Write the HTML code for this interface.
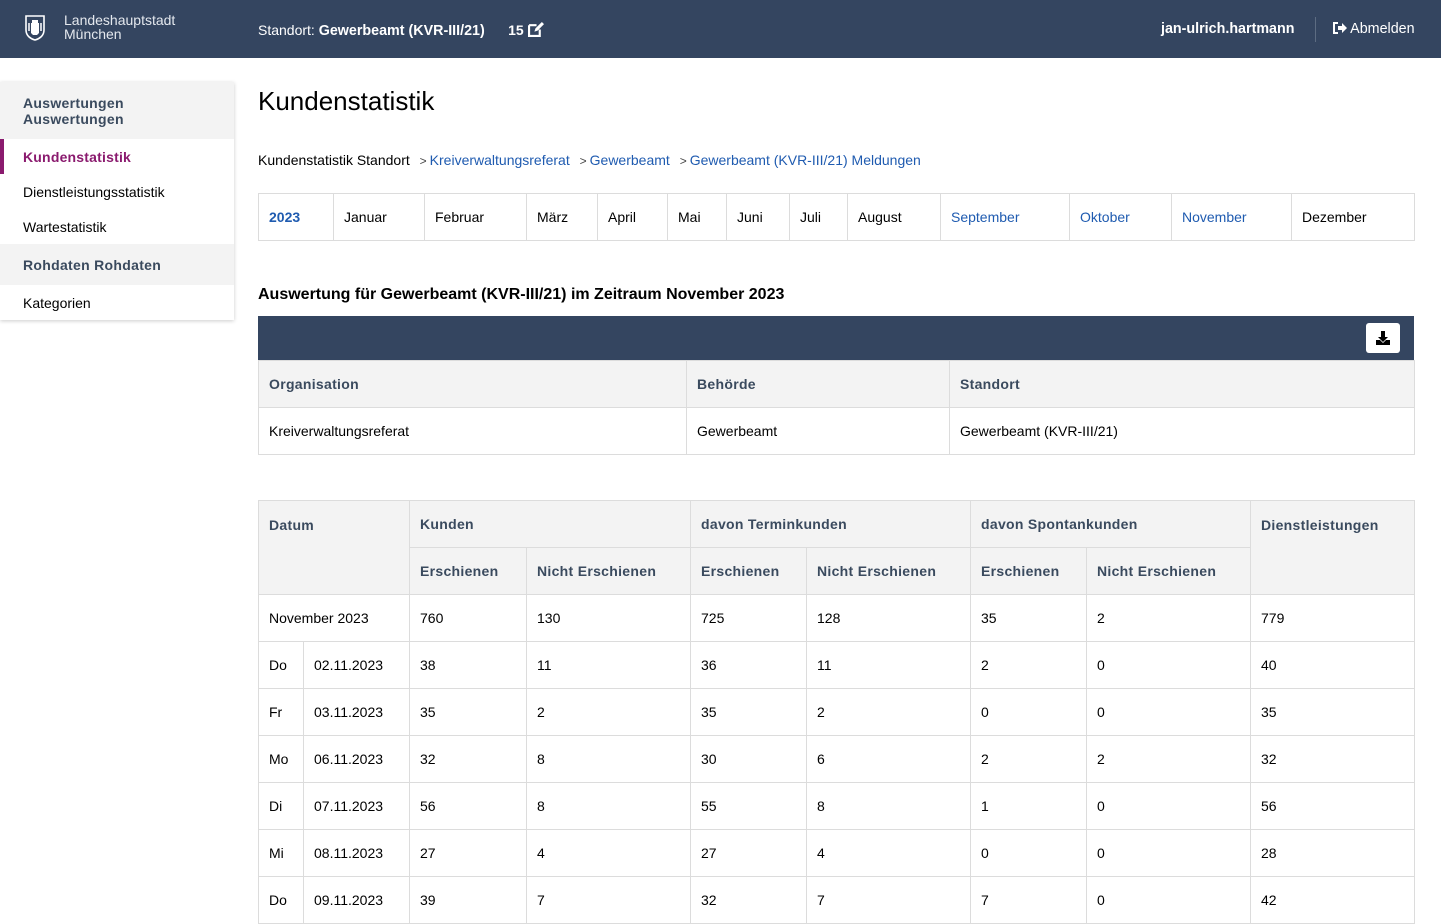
<!DOCTYPE html>
<html><head><meta charset="utf-8"><style>
*{box-sizing:border-box;margin:0;padding:0}
body{width:1441px;height:920px;overflow:hidden;background:#fff;font-family:"Liberation Sans",Arial,sans-serif;font-size:14px;color:#000;position:relative}
.hdr{position:absolute;left:0;top:0;width:1441px;height:58px;background:#344560;color:#fff}
.hdr .logo{position:absolute;left:24px;top:14px}
.hdr .lt{position:absolute;left:64px;top:13px;font-size:14px;line-height:14px;color:#e4e8ee}
.hdr .st{position:absolute;left:258px;top:22px;font-size:14px}
.hdr .user{position:absolute;left:1161px;top:21px;font-weight:bold;font-size:14.3px}
.hdr .sep{position:absolute;left:1315px;top:17px;width:1px;height:25px;background:#5d6c82}
.hdr .ab{position:absolute;left:1333px;top:21px;font-size:14.3px}
.side{position:absolute;left:0;top:82px;width:234px;box-shadow:0 1px 4px rgba(0,0,0,.2);background:#fff}
.side div{padding-left:23px;font-size:14px}
.sh{background:#f3f3f3;color:#3a4a5e;font-weight:bold;letter-spacing:.3px}
h1{position:absolute;left:258px;top:86px;font-size:26px;font-weight:normal}
.bc{position:absolute;left:258px;top:152px;font-size:14px}
.bc a{color:#1f5bb0;text-decoration:none}
.bc .g{color:#444;margin:0 3px 0 6px;font-size:12px}
table{border-collapse:collapse;table-layout:fixed;position:absolute;left:258px}
td,th{border:1px solid #dcdcdc;padding:0 10px;text-align:left;font-size:14px;white-space:nowrap}
th{background:#f3f3f3;color:#3a4a5e;font-weight:bold;letter-spacing:.3px}
.nav td{height:47px}
.nav .l{color:#1f5bb0}
h2{position:absolute;left:258px;top:286px;font-size:16px;font-weight:bold}
.bar{position:absolute;left:258px;top:316px;width:1156px;height:44px;background:#344560}
.dl{position:absolute;right:14px;top:7px;width:34px;height:30px;background:#fff;border-radius:3px}
.t2 td,.t2 th{height:47px}
.t3 td,.t3 th{height:47px}
</style></head><body>
<div class="hdr">
<svg class="logo" width="22" height="28" viewBox="0 0 22 28"><path d="M2 2h18v14c0 6-5 9-9 10C7 25 2 22 2 16z" fill="none" stroke="#fff" stroke-width="1.6"/><path d="M8 6h6v3h-6zM7 9h8v10l-2 2h-4l-2-2z" fill="#fff"/><path d="M5 9v8M17 9v8" stroke="#fff" stroke-width="1.5"/></svg>
<div class="lt">Landeshauptstadt<br>München</div>
<div class="st">Standort: <b style="font-size:14.3px">Gewerbeamt (KVR-III/21)</b>&nbsp;&nbsp;&nbsp;&nbsp;&nbsp;&nbsp;<b>15</b> <svg width="16" height="15" viewBox="0 0 15 14" style="vertical-align:-2px"><path d="M1 3h7M1 3v10h10V7" fill="none" stroke="#fff" stroke-width="2"/><path d="M6 9l1-3 6-6 2 2-6 6z" fill="#fff"/></svg></div>
<div class="user">jan-ulrich.hartmann</div>
<div class="sep"></div>
<div class="ab"><svg width="14" height="12" viewBox="0 0 14 12" style="vertical-align:-1px"><path d="M5 1H1v10h4" fill="none" stroke="#fff" stroke-width="2"/><path d="M5 4h4V1l5 5-5 5V8H5z" fill="#fff"/></svg> Abmelden</div>
</div>
<div class="side">
<div class="sh" style="height:57px;padding-top:13px;line-height:16px">Auswertungen<br>Auswertungen</div>
<div style="height:35px;line-height:37px;color:#8a1a6e;font-weight:bold;border-left:4px solid #8a1a6e;padding-left:19px;letter-spacing:.2px">Kundenstatistik</div>
<div style="height:35px;line-height:37px">Dienstleistungsstatistik</div>
<div style="height:35px;line-height:37px">Wartestatistik</div>
<div class="sh" style="height:41px;line-height:43px">Rohdaten Rohdaten</div>
<div style="height:35px;line-height:37px">Kategorien</div>
</div>
<h1>Kundenstatistik</h1>
<div class="bc">Kundenstatistik Standort <span class="g">&gt;</span><a>Kreiverwaltungsreferat</a> <span class="g">&gt;</span><a>Gewerbeamt</a> <span class="g">&gt;</span><a>Gewerbeamt (KVR-III/21) Meldungen</a></div>
<table class="nav" style="top:193px;width:1156px"><colgroup><col style="width:75px"><col style="width:91px"><col style="width:102px"><col style="width:71px"><col style="width:70px"><col style="width:59px"><col style="width:63px"><col style="width:58px"><col style="width:93px"><col style="width:129px"><col style="width:102px"><col style="width:120px"><col style="width:123px"></colgroup>
<tr><td class="l"><b>2023</b></td><td>Januar</td><td>Februar</td><td>März</td><td>April</td><td>Mai</td><td>Juni</td><td>Juli</td><td>August</td><td class="l">September</td><td class="l">Oktober</td><td class="l">November</td><td>Dezember</td></tr></table>
<h2>Auswertung für Gewerbeamt (KVR-III/21) im Zeitraum November 2023</h2>
<div class="bar"><div class="dl"><svg width="34" height="30" viewBox="0 0 34 30"><path d="M15 8h4v6h3l-5 5-5-5h3z" fill="#000"/><path d="M10 17h4l3 3 3-3h4v5H10z" fill="#000"/></svg></div></div>
<table class="t2" style="top:360px;width:1156px"><colgroup><col style="width:428px"><col style="width:263px"><col style="width:465px"></colgroup>
<tr><th>Organisation</th><th>Behörde</th><th>Standort</th></tr>
<tr><td>Kreiverwaltungsreferat</td><td>Gewerbeamt</td><td>Gewerbeamt (KVR-III/21)</td></tr></table>
<table class="t3" style="top:500px;width:1156px"><colgroup><col style="width:45px"><col style="width:106px"><col style="width:117px"><col style="width:164px"><col style="width:116px"><col style="width:164px"><col style="width:116px"><col style="width:164px"><col style="width:164px"></colgroup>
<tr><th colspan="2" rowspan="2" style="vertical-align:top;padding-top:16px">Datum</th><th colspan="2">Kunden</th><th colspan="2">davon Terminkunden</th><th colspan="2">davon Spontankunden</th><th rowspan="2" style="vertical-align:top;padding-top:16px">Dienstleistungen</th></tr>
<tr><th>Erschienen</th><th>Nicht Erschienen</th><th>Erschienen</th><th>Nicht Erschienen</th><th>Erschienen</th><th>Nicht Erschienen</th></tr>
<tr><td colspan="2">November 2023</td><td>760</td><td>130</td><td>725</td><td>128</td><td>35</td><td>2</td><td>779</td></tr>
<tr><td>Do</td><td>02.11.2023</td><td>38</td><td>11</td><td>36</td><td>11</td><td>2</td><td>0</td><td>40</td></tr>
<tr><td>Fr</td><td>03.11.2023</td><td>35</td><td>2</td><td>35</td><td>2</td><td>0</td><td>0</td><td>35</td></tr>
<tr><td>Mo</td><td>06.11.2023</td><td>32</td><td>8</td><td>30</td><td>6</td><td>2</td><td>2</td><td>32</td></tr>
<tr><td>Di</td><td>07.11.2023</td><td>56</td><td>8</td><td>55</td><td>8</td><td>1</td><td>0</td><td>56</td></tr>
<tr><td>Mi</td><td>08.11.2023</td><td>27</td><td>4</td><td>27</td><td>4</td><td>0</td><td>0</td><td>28</td></tr>
<tr><td>Do</td><td>09.11.2023</td><td>39</td><td>7</td><td>32</td><td>7</td><td>7</td><td>0</td><td>42</td></tr>
</table>
</body></html>
